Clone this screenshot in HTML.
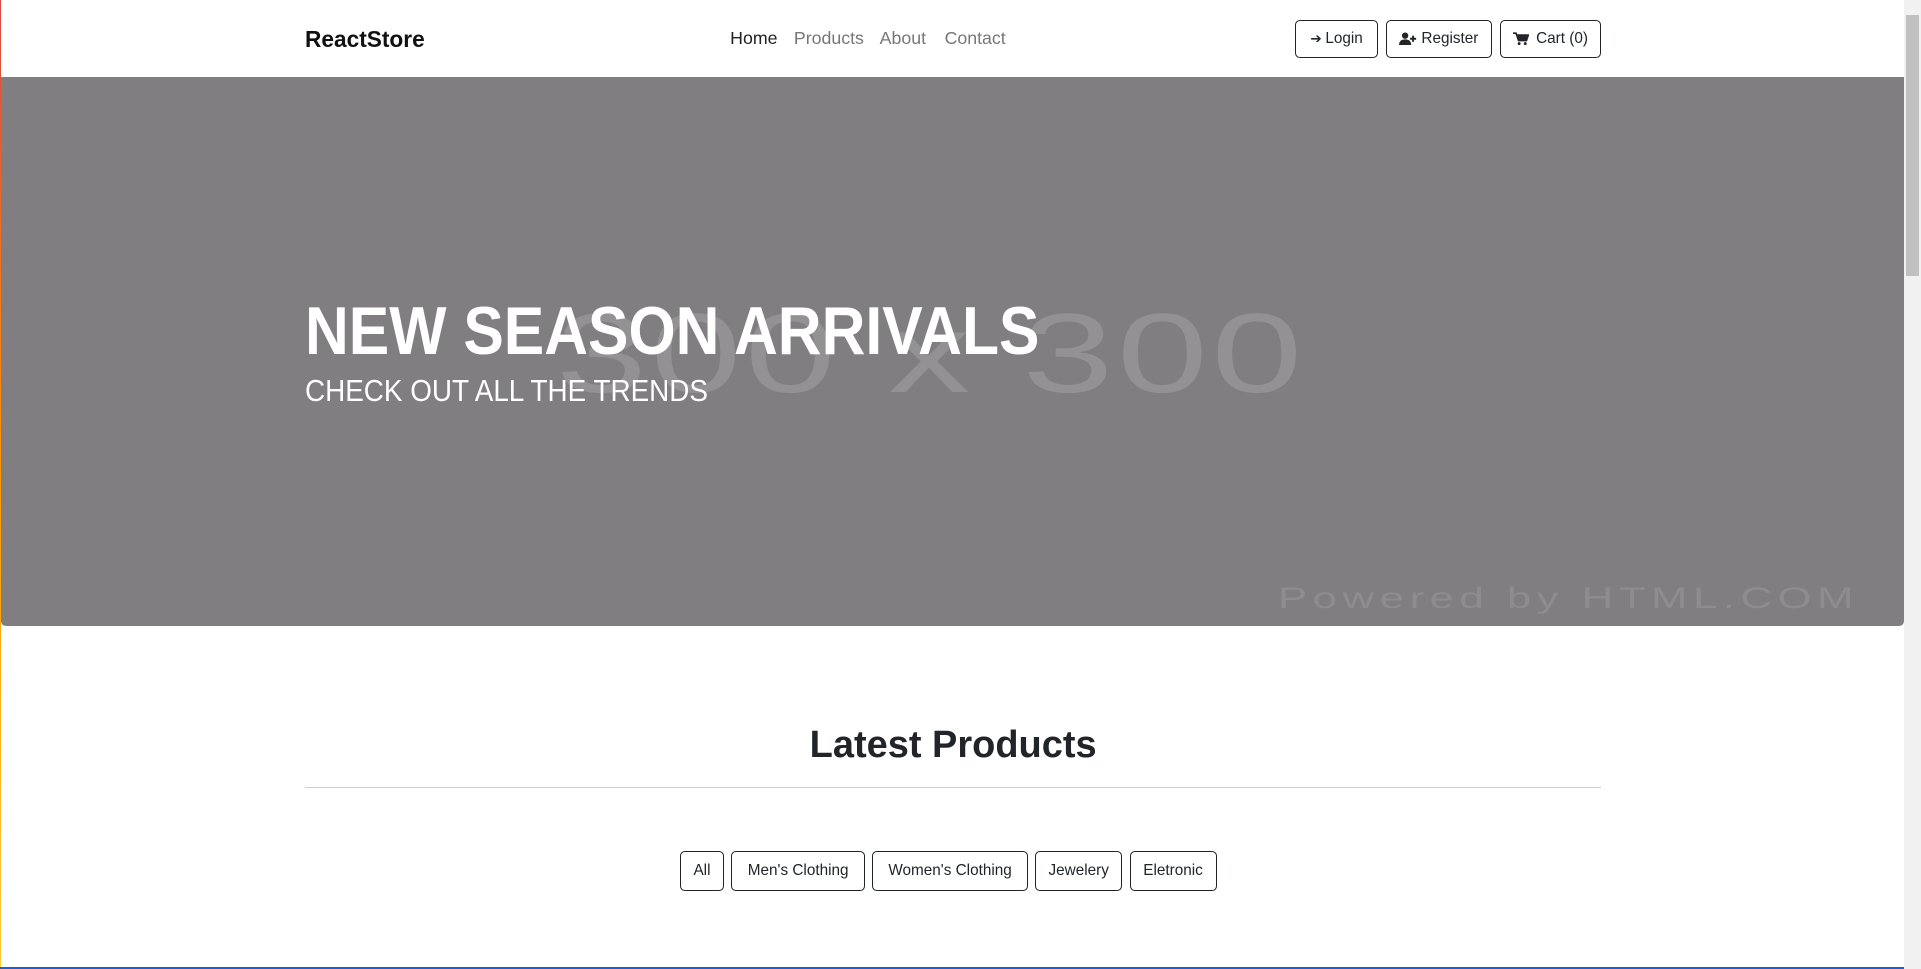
<!DOCTYPE html>
<html><head><meta charset="utf-8"><style>
html{zoom:1.22513}
body{margin:0;width:1568px;height:791px;overflow:hidden;position:relative;background:#fff;font-family:"Liberation Sans",sans-serif;color:#212529}
.a{position:absolute}
.brand{left:249px;top:21px;font-size:18.5px;font-weight:bold;color:#111}
.nav{top:23px;font-size:14.5px;color:#777}
.btn{position:absolute;top:16px;border:1px solid #212529;border-radius:4px;font-size:12.5px;display:flex;align-items:center;justify-content:center;box-sizing:border-box;height:31px;color:#212529}
.hero{left:1px;top:63px;width:1553px;height:448px;background:#807e81;border-radius:0 0 4px 4px;overflow:hidden}
.f{position:absolute;top:695px;height:32px;border:1px solid #212529;border-radius:4px;box-sizing:border-box;font-size:12.5px;display:flex;align-items:center;justify-content:center}
</style></head><body>
<div class="a brand">ReactStore</div>
<div class="a nav" style="left:596px;color:#222">Home</div>
<div class="a nav" style="left:648px">Products</div>
<div class="a nav" style="left:718px">About</div>
<div class="a nav" style="left:771px">Contact</div>
<div class="btn" style="left:1057px;width:68px"><span style="font-size:11px;margin-right:3px">➔</span>Login</div>
<div class="btn" style="left:1131px;width:87px"><svg width="14" height="11" viewBox="0 0 14 11" style="margin-right:4px"><circle cx="5" cy="3" r="2.6" fill="#212529"/><path d="M0 11 Q0 6 5 6 Q10 6 10 11Z" fill="#212529"/><path d="M11.5 3v5M9 5.5h5" stroke="#212529" stroke-width="1.6"/></svg>Register</div>
<div class="btn" style="left:1224px;width:83px"><svg width="13" height="11" viewBox="0 0 13 11" style="margin-right:6px"><path d="M0 1h2.5l2 6h6.5l1.5-4.5H3.5" fill="#212529" stroke="#212529" stroke-width="1.3"/><circle cx="5" cy="9.5" r="1.2" fill="#212529"/><circle cx="10" cy="9.5" r="1.2" fill="#212529"/></svg>Cart (0)</div>
<div class="hero a">
<div class="a" style="left:453px;top:172px;font-size:92px;color:#939194;letter-spacing:2px;transform:scaleX(1.45);transform-origin:0 0;white-space:nowrap">300 x 300</div>
<div class="a" style="left:1042px;top:412px;font-size:24px;color:#8e8c8f;letter-spacing:3px;transform:scaleX(1.49);transform-origin:0 0;white-space:nowrap">Powered by HTML.COM</div>
<div class="a" style="left:248px;top:176px;font-size:55px;font-weight:bold;color:#fff;transform:scaleX(.9);transform-origin:0 0;white-space:nowrap">NEW SEASON ARRIVALS</div>
<div class="a" style="left:248px;top:242px;font-size:25px;color:#fff;transform:scaleX(.91);transform-origin:0 0;white-space:nowrap">CHECK OUT ALL THE TRENDS</div>
</div>
<div class="a" style="left:1554px;top:0;width:14px;height:791px;background:#f1f1f1"></div>
<div class="a" style="left:1556px;top:12px;width:10px;height:213px;background:#c1c1c1"></div>
<div class="a" style="left:0;top:0;width:1px;height:791px;background:linear-gradient(#d44,#f90,#fc3)"></div>
<div class="a" style="left:0;top:789px;width:1554px;height:2px;background:#1a5fd8"></div>
<div class="a" style="left:249px;width:1058px;top:591px;text-align:center;font-size:31px;font-weight:bold">Latest Products</div>
<div class="a" style="left:249px;top:642px;width:1058px;height:1px;background:#cfcfcf"></div>
<div class="f" style="left:555px;width:36px">All</div>
<div class="f" style="left:597px;width:109px">Men's Clothing</div>
<div class="f" style="left:712px;width:127px">Women's Clothing</div>
<div class="f" style="left:845px;width:71px">Jewelery</div>
<div class="f" style="left:922px;width:71px">Eletronic</div>
</body></html>
